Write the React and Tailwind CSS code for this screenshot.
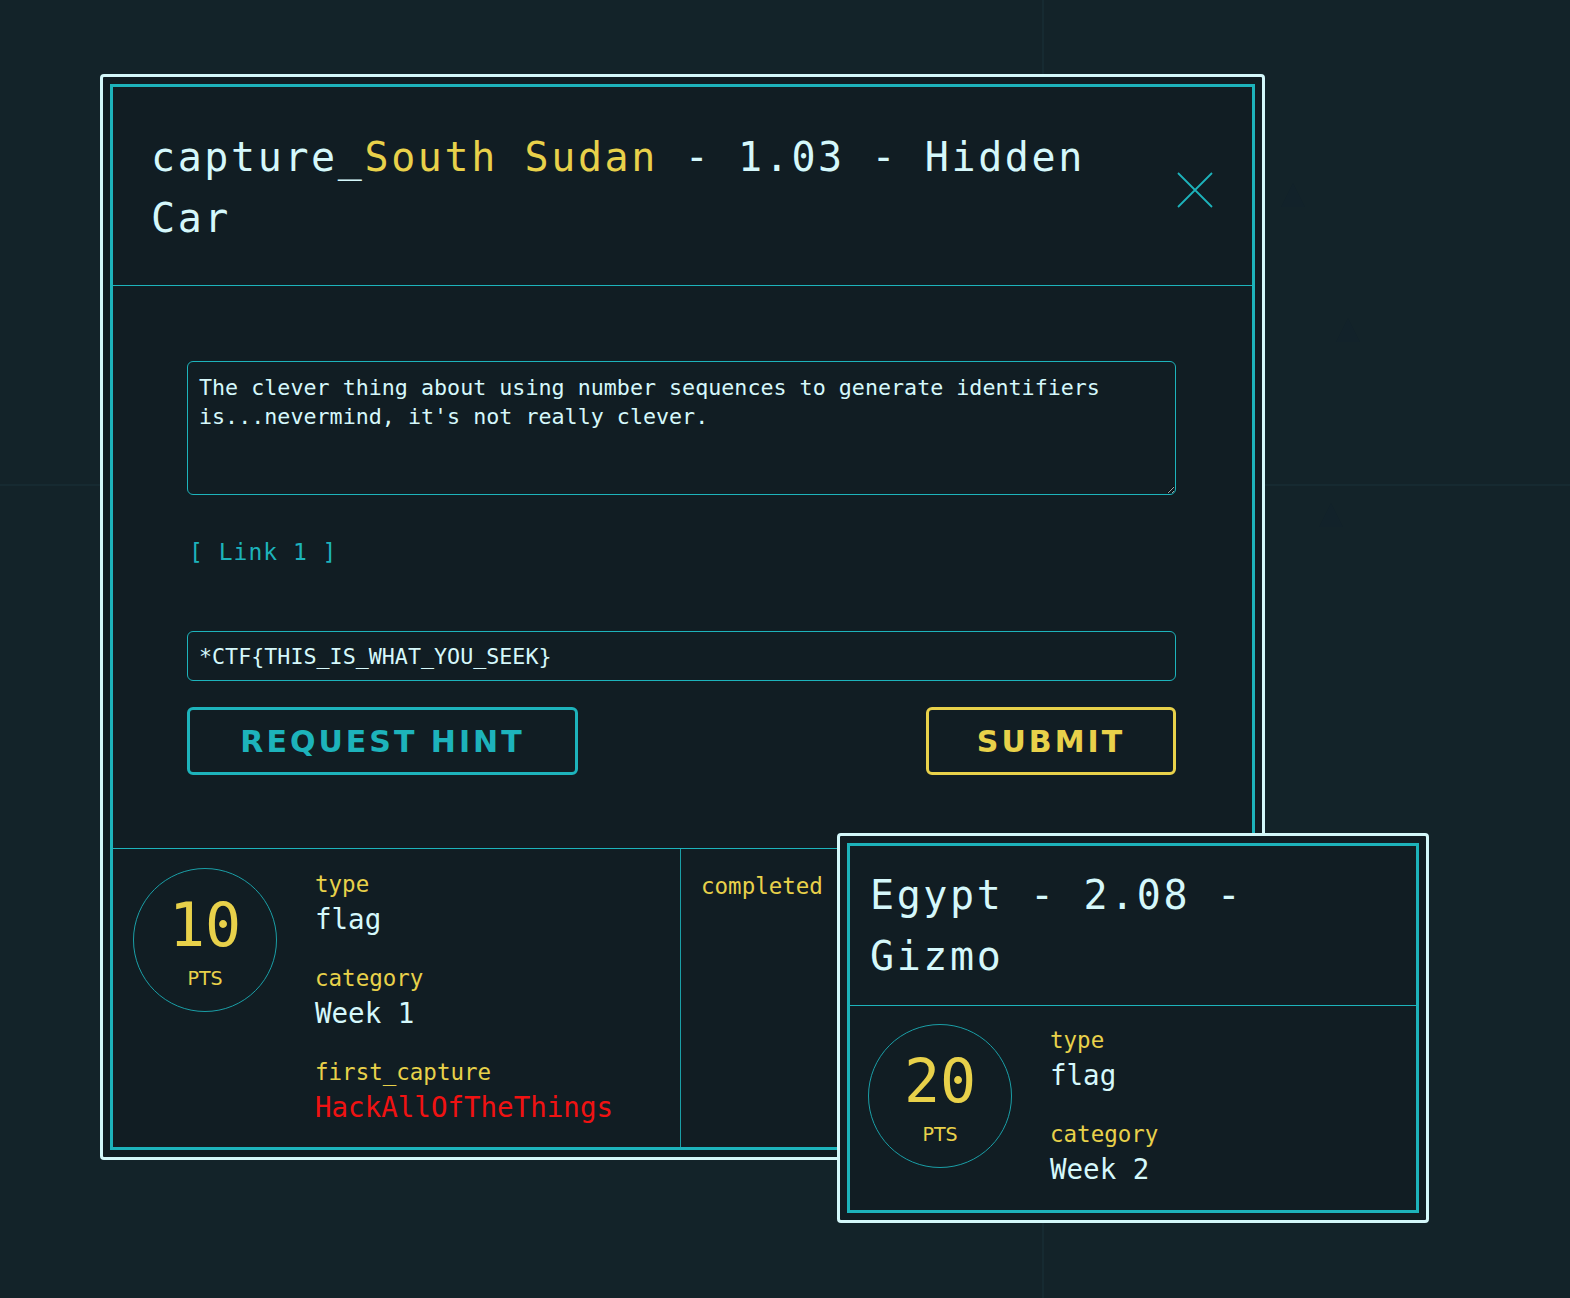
import React from 'react';

const mono = "font-['DejaVu_Sans_Mono',monospace]";

function Frame({ className, children }) {
    return (
        <div className={`rounded-[4px] border-[3px] border-[#d4f8fa] bg-[#111d23] p-[7px] ${className}`}>
            <div className="h-full border-[3px] border-[#1db3bb] flex flex-col">{children}</div>
        </div>
    );
}

function Points({ value }) {
    return (
        <div className="w-[144px] h-[144px] shrink-0 rounded-full border border-[#1a9ea6] flex flex-col items-center justify-center text-[#e8d14a]">
            <span className={`${mono} text-[60px] leading-[60px] mt-[3px]`}>{value}</span>
            <span className="font-['DejaVu_Sans',sans-serif] text-[19px] leading-[22px] mt-[12px]">PTS</span>
        </div>
    );
}

function Detail({ label, value, valueClass = 'text-[#d5f8fb]', first }) {
    return (
        <div className={first ? '' : 'mt-[28px]'}>
            <div className={`${mono} text-[22.5px] leading-[28px] text-[#e8d14a]`}>{label}</div>
            <div className={`${mono} text-[27.5px] leading-[34px] mt-[4px] ${valueClass}`}>{value}</div>
        </div>
    );
}

const titleClass = `${mono} text-[40px] leading-[61px] tracking-[2.6px] text-[#d5f8fb]`;
const btnClass = "font-['DejaVu_Sans',sans-serif] font-bold text-[30px] tracking-[3px]";

export default function App() {
    return (
        <div className="relative w-full h-[1298px] overflow-hidden bg-[#132329]">
            {/* faint background grid */}
            <div className="absolute left-0 right-0 top-[484px] h-[2px] bg-[#162a31]" />
            <div className="absolute top-0 bottom-0 left-[1042px] w-[2px] bg-[#162a31]" />
            <svg className="absolute left-[1278px] top-[180px]" width="30" height="30" viewBox="0 0 30 30">
                <path d="M15 3 L27 27 L3 27 Z" fill="#12222a" />
            </svg>
            <svg className="absolute left-[1333px] top-[315px]" width="30" height="30" viewBox="0 0 30 30">
                <path d="M15 3 L27 27 L3 27 Z" fill="#12222a" />
            </svg>
            <svg className="absolute left-[1316px] top-[500px]" width="30" height="30" viewBox="0 0 30 30">
                <path d="M15 3 L27 27 L3 27 Z" fill="#12222a" />
            </svg>

            <div className="relative pt-[74px] pl-[100px]">
                <Frame className="w-[1165px] h-[1086px]">
                    {/* header */}
                    <div className="flex items-center gap-[30px] pl-[38px] pr-[39px] pt-[40px] pb-[36px] border-b border-[#1db3bb]">
                        <h2 className={`flex-1 ${titleClass}`}>
                            capture_<span className="text-[#e8d14a]">South Sudan</span> - 1.03 - Hidden Car
                        </h2>
                        <svg width="36" height="36" viewBox="0 0 36 36" className="shrink-0 mt-[4px]">
                            <path d="M1 1 L35 35 M35 1 L1 35" stroke="#1db3bb" strokeWidth="1.8" />
                        </svg>
                    </div>

                    {/* body */}
                    <div className="pl-[74px] pr-[76px] pt-[75px] pb-[73px] border-b border-[#1db3bb]">
                        <textarea
                            readOnly
                            className={`block w-full h-[134px] rounded-[6px] border border-[#1db3bb] bg-transparent p-[11px] ${mono} text-[21.7px] leading-[29px] text-[#d5f8fb] outline-none`}
                            value="The clever thing about using number sequences to generate identifiers is...nevermind, it's not really clever."
                        />
                        <a className={`block mt-[42px] pl-[2px] ${mono} text-[23px] leading-[30px] tracking-[1px] text-[#1db3bb]`}>
                            [ Link 1 ]
                        </a>
                        <input
                            readOnly
                            value="*CTF{THIS_IS_WHAT_YOU_SEEK}"
                            className={`block w-full mt-[64px] h-[50px] rounded-[6px] border border-[#1db3bb] bg-transparent px-[11px] ${mono} text-[21.7px] text-[#d5f8fb] outline-none`}
                        />
                        <div className="flex justify-between mt-[26px]">
                            <button className={`w-[391px] h-[68px] rounded-[6px] border-[3px] border-[#1db3bb] ${btnClass} text-[#1db3bb]`}>
                                REQUEST HINT
                            </button>
                            <button className={`w-[250px] h-[68px] rounded-[6px] border-[3px] border-[#e8d14a] ${btnClass} text-[#e8d14a]`}>
                                SUBMIT
                            </button>
                        </div>
                    </div>

                    {/* footer */}
                    <div className="flex-1 flex">
                        <div className="w-[568px] border-r border-[#1a9ea6] flex items-start gap-[38px] pl-[20px]">
                            <div className="pt-[19px]">
                                <Points value="10" />
                            </div>
                            <div className="pt-[21px]">
                                <Detail first label="type" value="flag" />
                                <Detail label="category" value="Week 1" />
                                <Detail label="first_capture" value="HackAllOfTheThings" valueClass="text-[#f01212]" />
                            </div>
                        </div>
                        <div className="flex-1 pl-[20px] pt-[23px]">
                            <div className={`${mono} text-[22.5px] leading-[28px] text-[#e8d14a]`}>completed</div>
                        </div>
                    </div>
                </Frame>
            </div>

            {/* second challenge card, stacked on top */}
            <Frame className="absolute left-[837px] top-[833px] w-[592px] h-[390px]">
                <div className="pl-[20px] pr-[40px] pt-[19px] pb-[18px] border-b border-[#1db3bb]">
                    <h2 className={titleClass}>Egypt - 2.08 - Gizmo</h2>
                </div>
                <div className="flex items-start gap-[38px] pl-[18px]">
                    <div className="pt-[18px]">
                        <Points value="20" />
                    </div>
                    <div className="pt-[20px]">
                        <Detail first label="type" value="flag" />
                        <Detail label="category" value="Week 2" />
                    </div>
                </div>
            </Frame>
        </div>
    );
}
